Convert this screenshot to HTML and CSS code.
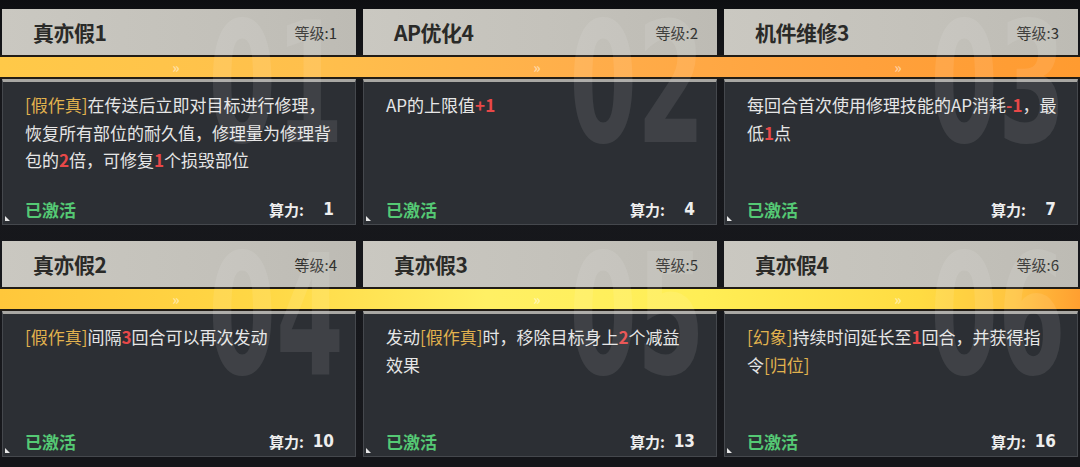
FILE: index.html
```html
<!DOCTYPE html>
<html lang="zh-CN">
<head>
    <meta charset="UTF-8">
    <meta name="viewport" content="width=device-width, initial-scale=1.0">
    <title>芯片列表</title>
    <link rel="stylesheet" href="styles.css">
</head>
<body>
    <div class="page">
        <section class="row">
            <div class="marks" aria-hidden="true"><span>01</span><span>02</span><span>03</span></div>
            <div class="heads">
                <div class="head"><span class="title">真亦假1</span><span class="level">等级:1</span></div>
                <div class="head"><span class="title">AP优化4</span><span class="level">等级:2</span></div>
                <div class="head"><span class="title">机件维修3</span><span class="level">等级:3</span></div>
            </div>
            <div class="bar bar-a"><span>»</span><span>»</span><span>»</span></div>
            <div class="bodies">
                <div class="card">
                    <p class="desc"><span class="tag">[假作真]</span>在传送后立即对目标进行修理，<br>恢复所有部位的耐久值，修理量为修理背<br>包的<span class="num">2</span>倍，可修复<span class="num">1</span>个损毁部位</p>
                    <div class="foot"><span class="state">已激活</span><span class="power">算力:<b>1</b></span></div>
                </div>
                <div class="card">
                    <p class="desc">AP的上限值<span class="num">+1</span></p>
                    <div class="foot"><span class="state">已激活</span><span class="power">算力:<b>4</b></span></div>
                </div>
                <div class="card">
                    <p class="desc">每回合首次使用修理技能的AP消耗<span class="num">-1</span>，最<br>低<span class="num">1</span>点</p>
                    <div class="foot"><span class="state">已激活</span><span class="power">算力:<b>7</b></span></div>
                </div>
            </div>
        </section>

        <section class="row">
            <div class="marks" aria-hidden="true"><span>04</span><span>05</span><span>06</span></div>
            <div class="heads">
                <div class="head"><span class="title">真亦假2</span><span class="level">等级:4</span></div>
                <div class="head"><span class="title">真亦假3</span><span class="level">等级:5</span></div>
                <div class="head"><span class="title">真亦假4</span><span class="level">等级:6</span></div>
            </div>
            <div class="bar bar-b"><span>»</span><span>»</span><span>»</span></div>
            <div class="bodies">
                <div class="card">
                    <p class="desc"><span class="tag">[假作真]</span>间隔<span class="num">3</span>回合可以再次发动</p>
                    <div class="foot"><span class="state">已激活</span><span class="power">算力:<b>10</b></span></div>
                </div>
                <div class="card">
                    <p class="desc">发动<span class="tag">[假作真]</span>时，移除目标身上<span class="num">2</span>个减益<br>效果</p>
                    <div class="foot"><span class="state">已激活</span><span class="power">算力:<b>13</b></span></div>
                </div>
                <div class="card">
                    <p class="desc"><span class="tag">[幻象]</span>持续时间延长至<span class="num">1</span>回合，并获得指<br>令<span class="tag">[归位]</span></p>
                    <div class="foot"><span class="state">已激活</span><span class="power">算力:<b>16</b></span></div>
                </div>
            </div>
        </section>
    </div>
</body>
</html>
```

FILE: styles.css
```css
* {
    margin: 0;
    padding: 0;
    box-sizing: border-box;
}

body {
    background-color: #141519;
    font-family: "Noto Sans CJK SC", "Noto Sans", sans-serif;
    width: 1080px;
    height: 467px;
    overflow: hidden;
}

.page {
    padding-top: 9px;
    display: flex;
    flex-direction: column;
    gap: 16px;
    background: linear-gradient(180deg, #0d0e11 0px, #16171b 60px, #17181c 100%);
}

.row {
    position: relative;
}

.heads,
.bodies,
.bar,
.marks {
    display: grid;
    grid-template-columns: repeat(3, 354px);
    column-gap: 7px;
    padding: 0 2px;
}

/* cabecera gris */
.head {
    height: 46px;
    background: linear-gradient(90deg, #cac8c1 0%, #c3c1ba 60%, #bdbbb4 100%);
    display: flex;
    align-items: center;
    justify-content: space-between;
    padding: 0 19px 0 31px;
}

.title {
    font-size: 21px;
    font-weight: bold;
    color: #2a2a28;
    letter-spacing: -0.5px;
}

.level {
    font-size: 15px;
    color: #2f2f2d;
}

/* barra naranja */
.bar {
    height: 24px;
    border-top: 2px solid #211c15;
    border-bottom: 2px solid #211c15;
}

.bar span {
    text-align: center;
    color: rgba(255, 255, 255, 0.5);
    font-size: 14px;
    font-weight: bold;
    line-height: 20px;
    padding-right: 6px;
}

.bar-a {
    background: linear-gradient(90deg, #ffc948 0%, #ffbf4c 30%, #ffad4a 55%, #ffa13c 80%, #ff9b30 100%);
}

.bar-b {
    background: linear-gradient(90deg, #ffc73b 0%, #ffd845 25%, #fff064 45%, #ffee55 65%, #ffdc42 85%, #ffc440 94%, #ff9f30 100%);
}

/* cuerpo */
.card {
    position: relative;
    height: 146px;
    background-color: #2c2f34;
    border: 1px solid #45484d;
    border-top: 3px solid #a8a7a3;
    display: flex;
    flex-direction: column;
    justify-content: space-between;
    padding: 9px 12px 1px 22px;
}

.card::after {
    content: "";
    position: absolute;
    left: 2px;
    bottom: 3px;
    border-left: 5px solid #e8e8e8;
    border-top: 5px solid transparent;
}

.desc {
    font-size: 17px;
    line-height: 27.5px;
    color: #e6e6e6;
    white-space: nowrap;
}

.tag {
    color: #e1b24e;
}

.num {
    color: #e84848;
    font-weight: bold;
}

.foot {
    height: 28px;
    display: flex;
    align-items: center;
    justify-content: space-between;
    padding-right: 9px;
}

.state {
    font-size: 17px;
    font-weight: bold;
    color: #55c974;
}

.power {
    font-size: 15px;
    font-weight: bold;
    color: #eeeeee;
    display: flex;
    align-items: center;
}

.power b {
    min-width: 30px;
    text-align: right;
    font-size: 17px;
    font-family: "DejaVu Sans Condensed", "DejaVu Sans", sans-serif;
}

/* números de fondo, encima de las tarjetas */
.marks {
    position: absolute;
    left: 0;
    right: 0;
    top: -9px;
    z-index: 1;
    pointer-events: none;
}

.marks span {
    justify-self: end;
    margin-right: 12px;
    font-family: "DejaVu Sans", sans-serif;
    font-weight: bold;
    font-size: 168px;
    line-height: 1;
    color: rgba(255, 255, 255, 0.09);
    transform: scaleX(0.58);
    transform-origin: right top;
}
```
